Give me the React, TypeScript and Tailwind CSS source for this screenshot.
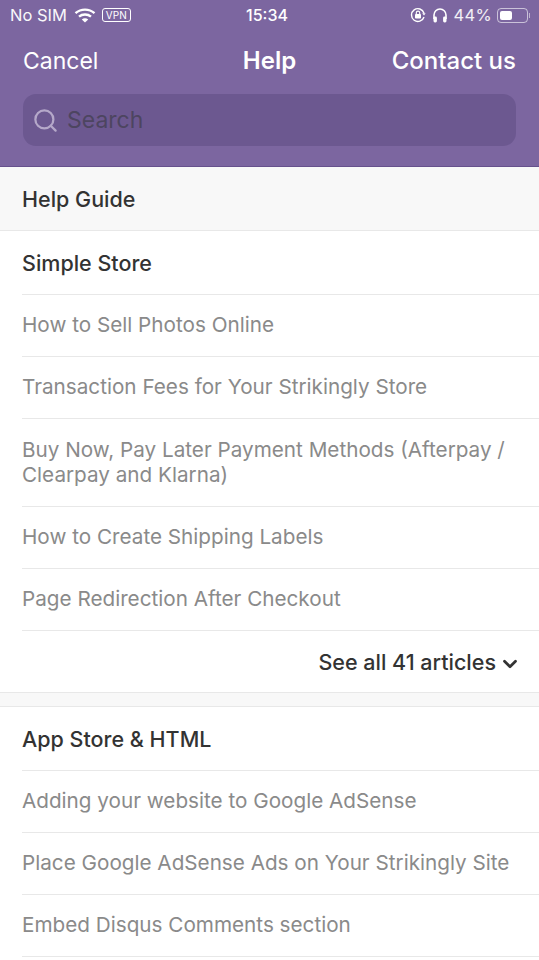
import { ChevronDown, Search } from "lucide-react";

const simpleStore = [
  { label: "How to Sell Photos Online", h: "h-[62px]" },
  { label: "Transaction Fees for Your Strikingly Store", h: "h-[62px]" },
  { label: "Buy Now, Pay Later Payment Methods (Afterpay / Clearpay and Klarna)", h: "h-[88px]" },
  { label: "How to Create Shipping Labels", h: "h-[62px]" },
  { label: "Page Redirection After Checkout", h: "h-[62px]" },
];

const appStore = [
  "Adding your website to Google AdSense",
  "Place Google AdSense Ads on Your Strikingly Site",
  "Embed Disqus Comments section",
];

function StatusBar() {
  return (
    <div className="h-[30px] flex items-center justify-between pl-[10px] pr-[9px] text-white text-[16.5px] leading-none relative">
      <div className="flex items-center">
        <span className="opacity-95">No SIM</span>
        <svg width="22" height="16" viewBox="0 0 22 16" className="ml-[7px]" fill="none" stroke="white" strokeWidth="2.4">
          <path d="M1.5 6.2C7 1.4 15 1.4 20.5 6.2" />
          <path d="M5 9.6C8.4 6.8 13.6 6.8 17 9.6" />
          <path d="M11 15.5L7.8 12.4C9.6 11 12.4 11 14.2 12.4Z" fill="white" stroke="none" />
        </svg>
        <span className="ml-[6px] h-[14px] w-[29px] rounded-[3px] border-[1.5px] border-white text-[10px] flex items-center justify-center tracking-[0.2px]">VPN</span>
      </div>
      <span className="absolute left-[246px] top-[7px] font-medium text-[16px]">15:34</span>
      <div className="flex items-center">
        <svg width="16" height="16" viewBox="0 0 16 16" fill="none" stroke="white" strokeWidth="1.4">
          <path d="M14 6.2A6.4 6.4 0 1 0 14 10" />
          <path d="M12.2 6.2L15.6 6.2L14 8.6Z" fill="white" stroke="none" />
          <rect x="5" y="7" width="6" height="4.6" rx="0.8" fill="white" stroke="none" />
          <path d="M6.3 7V5.8A1.7 1.7 0 0 1 9.7 5.8V7" strokeWidth="1.1" />
        </svg>
        <svg width="16" height="16" viewBox="0 0 16 16" className="ml-[6px]" fill="none" stroke="white" strokeWidth="1.6">
          <path d="M2 12V8A6 6 0 0 1 14 8V12" />
          <rect x="1.5" y="9.5" width="3.4" height="6" rx="1.4" fill="white" stroke="none" />
          <rect x="11.1" y="9.5" width="3.4" height="6" rx="1.4" fill="white" stroke="none" />
        </svg>
        <span className="ml-[6px] text-white/90 tracking-[0.3px]">44%</span>
        <div className="ml-[5px] h-[15px] w-[31px] rounded-[4px] border border-white/60 p-[2px]">
          <div className="h-full w-[12px] rounded-[2px] bg-white" />
        </div>
        <div className="ml-px h-[5px] w-px bg-white/50" />
      </div>
    </div>
  );
}

function SectionTitle({ children }: { children: string }) {
  return (
    <div className="ml-[22px] h-[64px] flex items-center border-b border-[#e8e8e8] pt-[2px] text-[21.5px] font-medium text-[#333333]">
      {children}
    </div>
  );
}

export default function App() {
  return (
    <div className="h-[960px] w-[539px] overflow-hidden bg-white font-['Inter','Roboto',sans-serif]">
      <header className="h-[167px] bg-[#7c66a0] border-b border-[#66518c]">
        <StatusBar />
        <div className="mt-[7px] h-[48px] px-[23px] grid grid-cols-3 items-center text-white">
          <span className="text-[23px]">Cancel</span>
          <span className="text-[24px] font-semibold text-center">Help</span>
          <span className="text-[24px] font-medium text-right whitespace-nowrap">Contact us</span>
        </div>
        <div className="mx-[23px] mt-[9px] h-[52px] rounded-[13px] bg-[#6c5890] flex items-center pl-[9px] gap-[8px]">
          <Search size={27} strokeWidth={2} className="text-[#b5a8c9]" />
          <span className="text-[23px] text-[#4d4560]">Search</span>
        </div>
      </header>

      <div className="h-[64px] bg-[#f8f8f8] border-b border-[#e8e8e8] pl-[22px] pt-[2px] flex items-center text-[21.5px] font-medium text-[#333333]">
        Help Guide
      </div>

      <SectionTitle>Simple Store</SectionTitle>
      {simpleStore.map((item) => (
        <div key={item.label} className={`ml-[22px] ${item.h} flex items-center border-b border-[#e8e8e8] pr-[20px] pb-[2px] text-[20.7px] leading-[25px] text-[#8a8a8a]`}>
          {item.label}
        </div>
      ))}
      <div className="h-[61px] flex items-center justify-end pr-[18px] pt-[2px] text-[21.5px] font-medium text-[#333333]">
        See all 41 articles
        <ChevronDown size={22} strokeWidth={3} className="ml-[3px] mt-[3px]" />
      </div>
      <div className="h-[15px] bg-[#f8f8f8] border-y border-[#e8e8e8]" />

      <SectionTitle>App Store &amp; HTML</SectionTitle>
      {appStore.map((label) => (
        <div key={label} className="ml-[22px] h-[62px] flex items-center border-b border-[#e8e8e8] pb-[2px] text-[20.7px] text-[#8a8a8a]">
          {label}
        </div>
      ))}
    </div>
  );
}
